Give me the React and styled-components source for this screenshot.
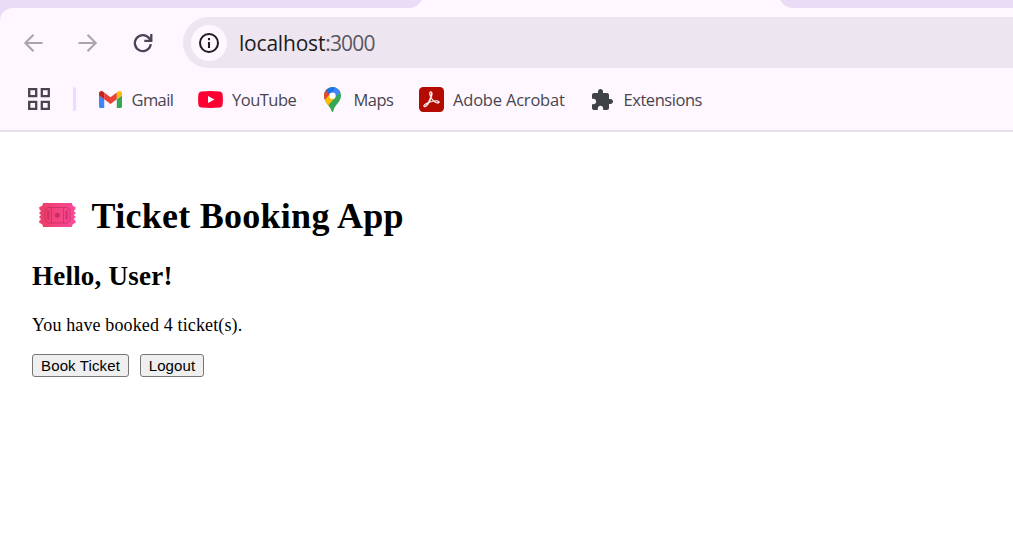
import React from 'react';
import styled, { createGlobalStyle } from 'styled-components';

const GlobalStyle = createGlobalStyle`
  * { box-sizing: border-box; }
  body { margin: 0; background: #fff; overflow: hidden; }
  svg { display: block; flex: none; }
`;

const Window = styled.div`
  display: flex;
  flex-direction: column;
  width: 1013px;
  height: 560px;
  overflow: hidden;
`;

const TabStrip = styled.div`
  display: flex;
  align-items: flex-end;
  justify-content: space-between;
  height: 8px;
  overflow: hidden;
  background: #fef7ff;
`;

const InactiveTabs = styled.div`
  flex: none;
  width: ${(p) => p.$width}px;
  height: 16px;
  background: #eadcf6;
  border-radius: ${(p) => (p.$side === 'left' ? '0 0 14px 0' : '0 0 0 14px')};
`;

const ChromeBack = styled.div`
  background: #eadcf6;
`;

const Chrome = styled.header`
  height: 124px;
  padding-top: 9px;
  background: #fef7ff;
  border-bottom: 2px solid #e7e0ec;
  border-top-left-radius: 13px;
`;

const Toolbar = styled.div`
  display: flex;
  align-items: center;
  height: 51px;
  padding-left: 21px;
`;

const NavButton = styled.div`
  display: flex;
  justify-content: center;
  width: 24px;
  margin-right: ${(p) => p.$gap}px;
  color: ${(p) => (p.$disabled ? '#aaa4ad' : '#4a4458')};
`;

const AddressBar = styled.div`
  display: flex;
  align-items: center;
  flex: 1;
  height: 51px;
  padding-left: 8px;
  background: #ede6f0;
  border-radius: 26px 0 0 26px;
`;

const SiteInfo = styled.div`
  display: flex;
  align-items: center;
  justify-content: center;
  width: 36px;
  height: 36px;
  margin-right: 12px;
  border-radius: 50%;
  background: #fef7ff;
  color: #1d1b20;
`;

const Url = styled.span`
  font: 21px/30px "Open Sans", sans-serif;
  letter-spacing: ${(p) => p.$spacing}px;
  color: ${(p) => p.$color};
`;

const Bookmarks = styled.nav`
  display: flex;
  align-items: center;
  height: 50px;
  margin-top: 6px;
  padding-left: 28px;
`;

const Divider = styled.div`
  width: 3px;
  height: 24px;
  margin: 0 23px;
  border-radius: 2px;
  background: #eaddff;
`;

const Bookmark = styled.div`
  display: flex;
  align-items: center;
  flex: none;
  width: ${(p) => p.$width}px;
`;

const BookmarkLabel = styled.span`
  margin-left: ${(p) => p.$gap}px;
  padding-top: 1px;
  font: 16.5px/24px "Open Sans", sans-serif;
  letter-spacing: ${(p) => p.$spacing}px;
  white-space: nowrap;
  color: #49454e;
`;

const Page = styled.main`
  flex: 1;
  padding: 61px 32px 0;
  background: #fff;
  color: #000;
  font-family: "Liberation Serif", serif;
`;

const Title = styled.h1`
  display: flex;
  align-items: flex-start;
  height: 46px;
  margin: 0;
  padding-left: 7px;
  font-size: 36px;
  line-height: 46px;

  svg { margin-top: 10px; }
`;

const TitleText = styled.span`
  margin-left: 15.5px;
  letter-spacing: 0.27px;
`;

const Greeting = styled.h2`
  margin: 21px 0 0;
  font-size: 27px;
  line-height: 32px;
  letter-spacing: 0.22px;
`;

const Status = styled.p`
  margin: 22px 0 0;
  font-size: 18px;
  line-height: 22px;
  letter-spacing: 0.13px;
`;

const Actions = styled.div`
  display: flex;
  gap: 11px;
  margin-top: 18px;
`;

const Button = styled.button`
  width: ${(p) => p.$width}px;
  height: 23px;
  padding: 0;
  border: 1px solid #767676;
  border-radius: 3px;
  background: #efefef;
  color: #000;
  font: 15px/21px "Liberation Sans", Arial, sans-serif;
  letter-spacing: 0.12px;
  white-space: nowrap;
`;

const Arrow = ({ flip }) => (
  <svg width="20" height="20" viewBox="0 0 20 20" fill="none" stroke="currentColor" strokeWidth="2.1">
    <path transform={flip ? 'matrix(-1 0 0 1 20 0)' : undefined} d="M19.500 10H2.500M10.500 1.800 2.300 10l8.200 8.200" />
  </svg>
);

const Reload = () => (
  <svg width="20" height="20" viewBox="0 0 20 20" fill="none" stroke="currentColor" strokeWidth="2.3">
    <path d="M17.800 11.200A8 8 0 1 1 16.200 5.200L18 7.300M18.300 1v6.900h-7" />
  </svg>
);

const Info = () => (
  <svg width="22" height="22" viewBox="0 0 22 22" fill="none" stroke="currentColor">
    <circle cx="11" cy="11" r="9" strokeWidth="2" />
    <path d="M11 10v6M11 6v2.200" strokeWidth="2.1" />
  </svg>
);

const Apps = () => (
  <svg width="22" height="22" viewBox="0 0 22 22" fill="none" stroke="#49454e" strokeWidth="2.3">
    <path d="M1.200 1.200h7v7h-7zM13.800 1.200h7v7h-7zM1.200 13.800h7v7h-7zM13.800 13.800h7v7h-7z" />
  </svg>
);

const Gmail = () => (
  <svg width="23" height="17" viewBox="52 42 88 66" preserveAspectRatio="none">
    <path fill="#4285f4" d="M58 108h14V74L52 59v43c0 3.320 2.690 6 6 6" />
    <path fill="#34a853" d="M120 108h14c3.320 0 6-2.690 6-6V59l-20 15" />
    <path fill="#fbbc04" d="M120 48v26l20-15v-8c0-7.420-8.470-11.650-14.400-7.200" />
    <path fill="#ea4335" d="M72 74V48l24 18 24-18v26L96 92" />
    <path fill="#c5221f" d="M52 51v8l20 15V48l-5.600-4.200c-5.940-4.450-14.400-.220-14.400 7.200" />
  </svg>
);

const YouTube = () => (
  <svg width="25" height="17" viewBox="0 0 25 17">
    <path fill="#ff0033" d="M3.500.4Q12.500-.4 21.500.4 24.300.6 24.600 3.500q.6 5 0 10-.3 2.900-3.100 3.100-9 .8-18 0Q.7 16.400.4 13.500q-.6-5 0-10Q.7.6 3.500.4z" />
    <path fill="#fff" d="m10 5 6.500 3.500L10 12z" />
  </svg>
);

const Maps = () => (
  <svg width="17" height="25" viewBox="0 0 17 25">
    <clipPath id="pin">
      <path d="M8.500 0A8.500 8.500 0 0 1 17 8.700C17 15.500 10.200 17.500 9.400 24.100Q9.200 25 8.500 25T7.600 24.100C6.800 19.500 0 15.500 0 8.700A8.500 8.500 0 0 1 8.500 0z" />
    </clipPath>
    <g clipPath="url(#pin)">
      <path fill="#34a853" d="M0 0h17v25H0z" />
      <path fill="#ea4335" d="M0 0h3L8.500 8.500 1.500 13 0 14V0z" />
      <path fill="#fbbc04" d="M0 13.700 6.300 6.500 10.800 11l-7.500 8.500L0 18z" />
      <path fill="#1a73e8" d="M1.800 3.200 6 0h7L6.300 8.700z" />
      <path fill="#4285f4" d="m12.200-.4 4.600 4.700-6 6.900L6.500 7.500z" />
      <circle cx="8.500" cy="8.700" r="3.200" fill="#fff" />
    </g>
  </svg>
);

const Acrobat = () => (
  <svg width="25" height="25" viewBox="0 0 25 25">
    <rect width="25" height="25" rx="4.200" fill="#b30b00" />
    <path
      transform="translate(4.600 4.300) scale(.66)"
      fill="#fff"
      stroke="#fff"
      strokeWidth=".9"
      d="M23.630 15.300c-.710-.745-2.166-1.170-4.224-1.170-1.100 0-2.377.106-3.761.354a19.443 19.443 0 0 1-2.307-2.661c-.532-.710-.994-1.490-1.420-2.236.817-2.484 1.207-4.507 1.207-5.962 0-1.632-.603-3.336-2.342-3.336-.532 0-1.065.320-1.349.781-.780 1.384-.425 4.400.923 7.381a60.277 60.277 0 0 1-1.703 4.507c-.568 1.349-1.207 2.733-1.917 4.010C2.834 18.530.314 20.340.030 21.758c-.106.533.071 1.030.462 1.420.142.107.639.533 1.490.533 2.590 0 5.323-4.188 6.707-6.707 1.065-.355 2.130-.710 3.194-.994a34.963 34.963 0 0 1 3.407-.745c2.732 2.448 5.145 2.839 6.352 2.839 1.490 0 2.023-.604 2.200-1.100.320-.640.106-1.349-.213-1.704zm-1.420 1.030c-.107.532-.640.887-1.384.887-.213 0-.390-.036-.604-.071-1.348-.320-2.626-.994-3.903-2.059a17.717 17.717 0 0 1 2.980-.248c.746 0 1.385.035 1.810.142.497.106 1.278.426 1.100 1.348zm-7.524-1.668a38.010 38.010 0 0 0-2.945.674 39.680 39.680 0 0 0-2.520.745 40.050 40.050 0 0 0 1.207-2.555c.426-.994.780-2.023 1.136-2.981.354.603.745 1.207 1.135 1.739a50.127 50.127 0 0 0 1.987 2.378zM10.038 1.460a.768.768 0 0 1 .674-.425c.745 0 .887.851.887 1.526 0 1.135-.355 2.874-.958 4.861-1.030-2.768-1.100-5.074-.603-5.962zM6.134 17.997c-1.810 2.981-3.549 4.826-4.613 4.826a.872.872 0 0 1-.532-.177c-.213-.213-.320-.461-.249-.745.213-1.065 2.271-2.555 5.394-3.904z"
    />
  </svg>
);

const Puzzle = () => (
  <svg width="21" height="21" viewBox="2 1 21 21">
    <path
      fill="#3f4347"
      d="M20.500 11H19V7c0-1.100-.9-2-2-2h-4V3.500C13 2.120 11.880 1 10.500 1S8 2.120 8 3.500V5H4c-1.100 0-1.990.9-1.990 2v3.800H3.500c1.490 0 2.700 1.210 2.700 2.700s-1.210 2.700-2.700 2.700H2V20c0 1.100.9 2 2 2h3.800v-1.500c0-1.490 1.210-2.700 2.700-2.700 1.490 0 2.700 1.210 2.700 2.700V22H17c1.100 0 2-.9 2-2v-4h1.500c1.380 0 2.500-1.120 2.500-2.500S21.880 11 20.500 11z"
    />
  </svg>
);

const Ticket = () => (
  <svg width="37" height="24" viewBox="0 0 37 24">
    <defs>
      <linearGradient id="ticket" x1="0" y1="0" x2="1" y2="0">
        <stop offset="0" stopColor="#ec3d68" />
        <stop offset="1" stopColor="#fb4b9b" />
      </linearGradient>
    </defs>
    <path
      fill="url(#ticket)"
      d="M4 0h29q0 3.500 3.500 4v2.600a1.400 1.400 0 0 0 0 2.800v1.300a1.400 1.400 0 0 0 0 2.800v1.300a1.400 1.400 0 0 0 0 2.800V20Q33 20.500 33 24H4Q4 20.500.3 20v-2.400a1.400 1.400 0 0 0 0-2.800v-1.300a1.400 1.400 0 0 0 0-2.800V9.400a1.400 1.400 0 0 0 0-2.800V4Q4 3.500 4 0z"
    />
    <g fill="none" stroke="#c42f62" strokeOpacity=".75" strokeWidth="1">
      <path d="M8.500 4.500h20q.3 2 2.500 2.300v11q-2.200.3-2.500 2.200h-20q-.3-1.900-2.500-2.200v-11q2.200-.3 2.500-2.300zM12.500 4.500V20M24.500 4.500V20" />
      <path d="M9.300 8.500v7M27.600 8.500v7" strokeWidth="2.500" strokeLinecap="round" />
    </g>
    <circle cx="18.400" cy="12.300" r="2.500" fill="#c42f62" />
  </svg>
);

const bookmarks = [
  { name: 'Gmail', icon: <Gmail />, width: 99, gap: 9.5, spacing: -0.6 },
  { name: 'YouTube', icon: <YouTube />, width: 126, gap: 9, spacing: -0.5 },
  { name: 'Maps', icon: <Maps />, width: 95, gap: 12.5, spacing: -0.55 },
  { name: 'Adobe Acrobat', icon: <Acrobat />, width: 173, gap: 9, spacing: -0.2 },
  { name: 'Extensions', icon: <Puzzle />, width: 115, gap: 10.5, spacing: -0.45 },
];

export default function App() {
  return (
    <Window>
      <GlobalStyle />
      <TabStrip>
        <InactiveTabs $side="left" $width={423} />
        <InactiveTabs $side="right" $width={234} />
      </TabStrip>
      <ChromeBack>
        <Chrome>
          <Toolbar>
            <NavButton $disabled $gap={31}><Arrow /></NavButton>
            <NavButton $disabled $gap={31}><Arrow flip /></NavButton>
            <NavButton $gap={28}><Reload /></NavButton>
            <AddressBar>
              <SiteInfo><Info /></SiteInfo>
              <Url $color="#1d1b20" $spacing={-0.2}>localhost</Url>
              <Url $color="#5a5560" $spacing={-0.8}>:3000</Url>
            </AddressBar>
          </Toolbar>
          <Bookmarks>
            <Apps />
            <Divider />
            {bookmarks.map((b) => (
              <Bookmark key={b.name} $width={b.width}>
                {b.icon}
                <BookmarkLabel $gap={b.gap} $spacing={b.spacing}>{b.name}</BookmarkLabel>
              </Bookmark>
            ))}
          </Bookmarks>
        </Chrome>
      </ChromeBack>
      <Page>
        <Title>
          <Ticket />
          <TitleText>Ticket Booking App</TitleText>
        </Title>
        <Greeting>Hello, User!</Greeting>
        <Status>You have booked 4 ticket(s).</Status>
        <Actions>
          <Button $width={97}>Book Ticket</Button>
          <Button $width={64}>Logout</Button>
        </Actions>
      </Page>
    </Window>
  );
}
